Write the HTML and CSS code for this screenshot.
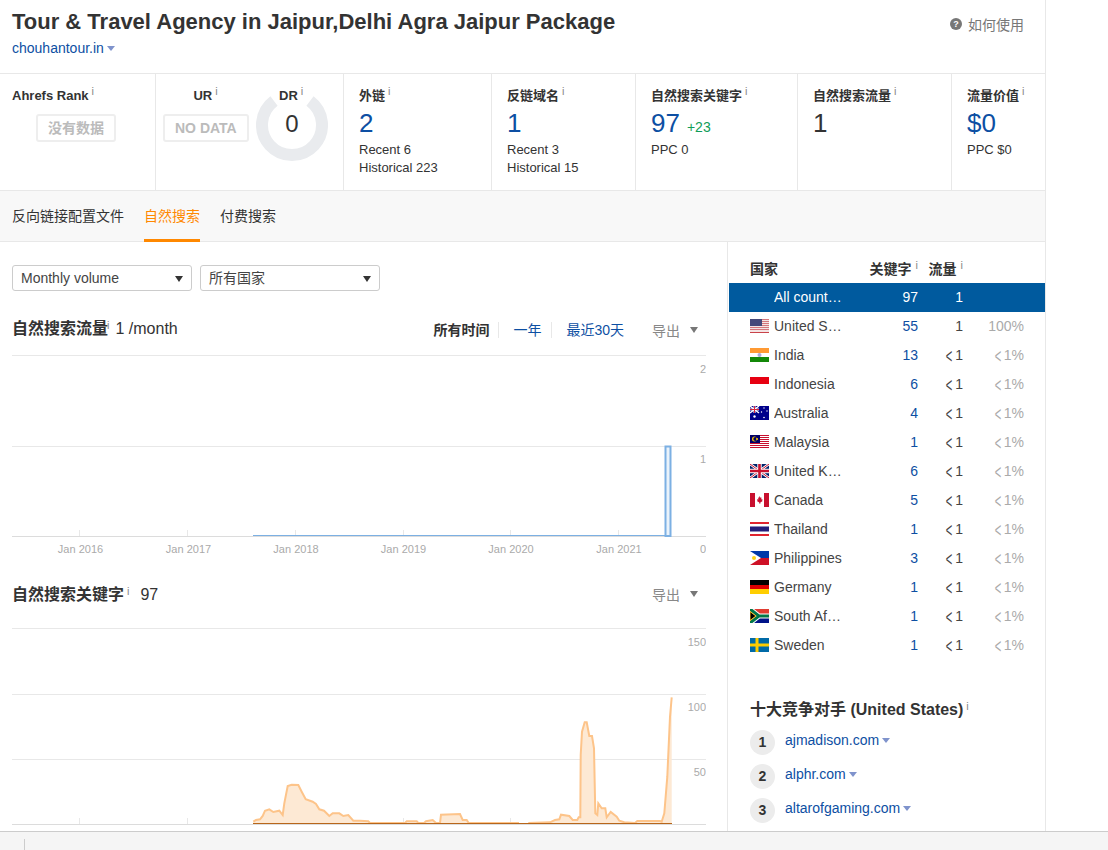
FILE: index.html
```html
<!DOCTYPE html>
<html>
  <head>
    <title>Tour &amp; Travel Agency in Jaipur</title>
    <link rel="stylesheet" href="styles.css">
  </head>
  <body>
    <!-- flags, drawn once and reused in the country table -->
    <svg class="defs" width="0" height="0">
      <symbol id="f-us" viewBox="0 0 19 14">
        <rect width="19" height="14" fill="#f4e4e4"/>
        <path d="M0 8.500h19M0 10.500h19M12 .5h7M12 2.500h7M12 4.500h7M12 6.500h7" stroke="#d4777c" stroke-width="1"/>
        <rect width="12" height="7" fill="#45497a"/>
        <path d="M0 13.500h19" stroke="#c9434a"/>
      </symbol>
      <symbol id="f-in" viewBox="0 0 19 14">
        <rect width="19" height="14" fill="#fff"/>
        <rect width="19" height="5" fill="#ff9a33"/>
        <rect y="9" width="19" height="5" fill="#138808"/>
        <circle cx="9.500" cy="7" r="2" fill="#a9a9d8"/>
      </symbol>
      <symbol id="f-id" viewBox="0 0 19 14">
        <rect width="19" height="7" fill="#e70011"/>
      </symbol>
      <symbol id="f-au" viewBox="0 0 19 14">
        <rect width="19" height="14" fill="#00008b"/>
        <path d="M0 0l9 7M9 0L0 7" stroke="#fff" stroke-width="1.400"/>
        <path d="M4.500 0v7M0 3.500h9" stroke="#fff" stroke-width="2"/>
        <path d="M4.500 0v7M0 3.500h9" stroke="#d8263c" stroke-width="1"/>
        <g fill="#fff">
          <circle cx="4.500" cy="10.500" r="1.200"/>
          <circle cx="14" cy="2" r=".7"/>
          <circle cx="17" cy="5" r=".7"/>
          <circle cx="11.500" cy="6" r=".7"/>
          <circle cx="14" cy="11.500" r=".8"/>
        </g>
      </symbol>
      <symbol id="f-my" viewBox="0 0 19 14">
        <rect width="19" height="14" fill="#fff"/>
        <path d="M0 .5h19M0 2.500h19M0 4.500h19M0 6.500h19M0 8.500h19M0 10.500h19M0 12.500h19" stroke="#c8102e" stroke-width="1"/>
        <rect width="10" height="8" fill="#010066"/>
        <circle cx="4.500" cy="4" r="2.500" fill="#fc0"/>
        <circle cx="5.300" cy="4" r="2" fill="#010066"/>
        <circle cx="7" cy="4" r="1.100" fill="#fc0"/>
      </symbol>
      <symbol id="f-gb" viewBox="0 0 19 14">
        <rect width="19" height="14" fill="#012169"/>
        <path d="M0 0l19 14M19 0L0 14" stroke="#fff" stroke-width="2.600"/>
        <path d="M0 0l19 14M19 0L0 14" stroke="#c8102e" stroke-width="1"/>
        <path d="M9.500 0v14M0 7h19" stroke="#fff" stroke-width="4.400"/>
        <path d="M9.500 0v14M0 7h19" stroke="#c8102e" stroke-width="2.600"/>
      </symbol>
      <symbol id="f-ca" viewBox="0 0 19 14">
        <rect width="19" height="14" fill="#fff"/>
        <rect width="5" height="14" fill="#c8102e"/>
        <rect x="14" width="5" height="14" fill="#c8102e"/>
        <path d="M9.500 3l1 1.800 1-.3-.3 2 1.300-.4-.4 1.500.6.500-2.400 1.400.2 1H9.100l.2-1-2.400-1.400.6-.5-.4-1.500 1.300.4-.3-2 1 .3z" fill="#c8102e"/>
      </symbol>
      <symbol id="f-th" viewBox="0 0 19 14">
        <rect width="19" height="14" fill="#fff"/>
        <rect width="19" height="2" fill="#e0242f"/>
        <rect y="12" width="19" height="2" fill="#e0242f"/>
        <rect y="4.500" width="19" height="5" fill="#241d7a"/>
      </symbol>
      <symbol id="f-ph" viewBox="0 0 19 14">
        <rect width="19" height="7" fill="#0038a8"/>
        <rect y="7" width="19" height="7" fill="#ce1126"/>
        <path d="M0 0l11 7-11 7z" fill="#fff"/>
        <circle cx="4" cy="7" r="2" fill="#fcd116"/>
      </symbol>
      <symbol id="f-de" viewBox="0 0 19 14">
        <rect width="19" height="5" fill="#000"/>
        <rect y="5" width="19" height="4" fill="#d00"/>
        <rect y="9" width="19" height="5" fill="#ffce00"/>
      </symbol>
      <symbol id="f-za" viewBox="0 0 19 14">
        <rect width="19" height="7" fill="#e03c31"/>
        <rect y="7" width="19" height="7" fill="#001489"/>
        <path d="M0 0l9 7-9 7M9 7h10" fill="none" stroke="#fff" stroke-width="5"/>
        <path d="M0 0l9 7-9 7M9 7h10" fill="none" stroke="#007749" stroke-width="3"/>
        <path d="M0 2.500L6 7l-6 4.500z" fill="#000" stroke="#ffb81c"/>
      </symbol>
      <symbol id="f-se" viewBox="0 0 19 14">
        <rect width="19" height="14" fill="#006aa7"/>
        <path d="M7 0v14M0 7h19" stroke="#fecc00" stroke-width="3"/>
      </symbol>
    </svg>

    <div class="page">
      <div class="main">
        <header class="site-head">
          <div>
            <h1>Tour &amp; Travel Agency in Jaipur,Delhi Agra Jaipur Package</h1>
            <a class="link site-url">chouhantour.in<span class="caret"></span></a>
          </div>
          <div class="help"><span class="help-icon">?</span>如何使用</div>
        </header>

        <section class="stats">
          <div class="stat stat-rank">
            <div class="stat-label">Ahrefs Rank<sup class="i">i</sup></div>
            <div class="no-data">没有数据</div>
          </div>
          <div class="stat stat-ratings">
            <div class="rating">
              <div class="stat-label">UR<sup class="i">i</sup></div>
              <div class="no-data">NO DATA</div>
            </div>
            <div class="rating rating-dr">
              <svg class="donut" width="72" height="72" viewBox="0 0 72 72">
                <path d="M54 12A30 30 0 1 1 18 12" fill="none" stroke="#e9ebee" stroke-width="12"/>
              </svg>
              <div class="stat-label">DR<sup class="i">i</sup></div>
              <div class="dr-value">0</div>
            </div>
          </div>
          <div class="stat">
            <div class="stat-label">外链<sup class="i">i</sup></div>
            <div class="stat-num blue">2</div>
            <div class="stat-sub">Recent 6<br>Historical 223</div>
          </div>
          <div class="stat">
            <div class="stat-label">反链域名<sup class="i">i</sup></div>
            <div class="stat-num blue">1</div>
            <div class="stat-sub">Recent 3<br>Historical 15</div>
          </div>
          <div class="stat">
            <div class="stat-label">自然搜索关键字<sup class="i">i</sup></div>
            <div class="stat-num blue">97<span class="delta">+23</span></div>
            <div class="stat-sub">PPC 0</div>
          </div>
          <div class="stat">
            <div class="stat-label">自然搜索流量<sup class="i">i</sup></div>
            <div class="stat-num">1</div>
          </div>
          <div class="stat stat-last">
            <div class="stat-label">流量价值<sup class="i">i</sup></div>
            <div class="stat-num blue">$0</div>
            <div class="stat-sub">PPC $0</div>
          </div>
        </section>

        <nav class="tabs">
          <a class="tab">反向链接配置文件</a>
          <a class="tab active">自然搜索</a>
          <a class="tab">付费搜索</a>
        </nav>

        <div class="content">
          <div class="left">
            <div class="filters">
              <div class="select">Monthly volume</div>
              <div class="select">所有国家</div>
            </div>

            <div class="chart-head head-traffic">
              <h2>自然搜索流量<sup class="i i-tight">i</sup></h2>
              <span class="chart-value">1 /month</span>
              <div class="ranges">
                <span class="range range-on">所有时间</span>
                <a class="range">一年</a>
                <a class="range">最近30天</a>
              </div>
              <div class="export">导出<span class="export-caret"></span></div>
            </div>
            <svg class="chart" width="694" height="201" viewBox="12 355 694 201">
              <g stroke="#e8e8e8">
                <path d="M12 355.500h694M12 446.500h694"/>
                <path d="M12 536.500h694" stroke="#dcdcdc"/>
                <path d="M79.500 530v6M187.500 530v6M295.500 530v6M403.500 530v6M510.500 530v6M618.500 530v6"/>
              </g>
              <path d="M665.500 536V446.500h5V536z" fill="#eaf3fb" stroke="#7cb0e3" stroke-width="2"/>
              <path d="M253 535.500h412" stroke="#7cb0e3"/>
              <g class="axis">
                <text x="80.500" y="553" text-anchor="middle">Jan 2016</text>
                <text x="188.500" y="553" text-anchor="middle">Jan 2017</text>
                <text x="296" y="553" text-anchor="middle">Jan 2018</text>
                <text x="403.500" y="553" text-anchor="middle">Jan 2019</text>
                <text x="511" y="553" text-anchor="middle">Jan 2020</text>
                <text x="619" y="553" text-anchor="middle">Jan 2021</text>
                <text x="706" y="373" text-anchor="end">2</text>
                <text x="706" y="463" text-anchor="end">1</text>
                <text x="706" y="553" text-anchor="end">0</text>
              </g>
            </svg>

            <div class="chart-head head-keywords">
              <h2>自然搜索关键字<sup class="i">i</sup></h2>
              <span class="chart-value">97</span>
              <div class="export">导出<span class="export-caret"></span></div>
            </div>
            <svg class="chart" width="694" height="197" viewBox="12 628 694 197">
              <g stroke="#e8e8e8">
                <path d="M12 628.500h694M12 694.500h694M12 759.500h694"/>
                <path d="M12 824.500h694" stroke="#dcdcdc"/>
                <path d="M79.500 818v6M187.500 818v6M295.500 818v6M403.500 818v6M510.500 818v6"/>
              </g>
              <path class="kw-area" d="M253 824L253.300 821.700 256 820 260 819.300 262.700 816 265 810.700 269.300 809.300 273.300 812 279.300 810.700 282.700 815 284.300 803.300 287.700 786 291.700 784.700 298.300 785 301.700 791.700 305.700 799.300 312.700 801.700 316 804 319.300 809.300 324 810.700 329.300 816 332.700 813.300 339.300 813.300 343.300 816 348.300 815 353.300 820.700 360 820.700 368.300 821.300 370 823 405 823 406.700 821.300 416.700 821.300 418.300 823 424 823 426 821.300 432.700 820 436 823 440 823 441 814.700 460 814 462.700 820 466.700 820 468.700 823 519 823 528.300 823 550 822.300 555 820 559.300 819.300 561 814.700 569.300 816 572.700 820 577.300 820 578.700 817.300 580.300 817.300 580.700 755 582 731.700 584.700 722.300 586.700 722.300 589.300 736 592 736 594 748.300 595.300 813.300 597.300 815 598.300 803.300 601.700 808.300 605.300 808.300 606.700 817.300 610.700 812 616.700 816.700 619.300 820.700 624.300 822.300 635 823 637.300 821 660 821 661.700 821.700 664.300 813.300 667.300 776.700 670 716.700 671.700 697.300 671.700 824z"/>
              <path class="kw-line" d="M253.300 821.700L256 820 260 819.300 262.700 816 265 810.700 269.300 809.300 273.300 812 279.300 810.700 282.700 815 284.300 803.300 287.700 786 291.700 784.700 298.300 785 301.700 791.700 305.700 799.300 312.700 801.700 316 804 319.300 809.300 324 810.700 329.300 816 332.700 813.300 339.300 813.300 343.300 816 348.300 815 353.300 820.700 360 820.700 368.300 821.300 370 823 405 823 406.700 821.300 416.700 821.300 418.300 823 424 823 426 821.300 432.700 820 436 823 440 823 441 814.700 460 814 462.700 820 466.700 820 468.700 823 519 823M528.300 823L550 822.300 555 820 559.300 819.300 561 814.700 569.300 816 572.700 820 577.300 820 578.700 817.300 580.300 817.300 580.700 755 582 731.700 584.700 722.300 586.700 722.300 589.300 736 592 736 594 748.300 595.300 813.300 597.300 815 598.300 803.300 601.700 808.300 605.300 808.300 606.700 817.300 610.700 812 616.700 816.700 619.300 820.700 624.300 822.300 635 823 637.300 821 660 821 661.700 821.700 664.300 813.300 667.300 776.700 670 716.700 671.700 697.300"/>
              <path d="M253 823.500h419" stroke="#b8661a"/>
              <g class="axis">
                <text x="706" y="646" text-anchor="end">150</text>
                <text x="706" y="711" text-anchor="end">100</text>
                <text x="706" y="776" text-anchor="end">50</text>
              </g>
            </svg>
          </div>

          <aside class="right">
            <table class="countries">
              <thead>
                <tr>
                  <th class="c-name">国家</th>
                  <th class="c-kw">关键字<sup class="i">i</sup></th>
                  <th class="c-tr">流量<sup class="i">i</sup></th>
                  <th class="c-pct"></th>
                  <th class="c-end"></th>
                </tr>
              </thead>
              <tbody>
                <tr class="row-on">
                  <td class="c-name"><div class="name-cell"><span class="flag"></span><span class="name">All countries</span></div></td>
                  <td class="c-kw">97</td><td class="c-tr">1</td><td class="c-pct"></td><td></td>
                </tr>
                <tr>
                  <td class="c-name"><div class="name-cell"><svg class="flag"><use href="#f-us"/></svg><span class="name">United States</span></div></td>
                  <td class="c-kw"><a class="link">55</a></td><td class="c-tr">1</td><td class="c-pct">100%</td><td></td>
                </tr>
                <tr>
                  <td class="c-name"><div class="name-cell"><svg class="flag"><use href="#f-in"/></svg><span class="name">India</span></div></td>
                  <td class="c-kw"><a class="link">13</a></td><td class="c-tr"><span class="lt">&lt;</span>1</td><td class="c-pct"><span class="lt">&lt;</span>1%</td><td></td>
                </tr>
                <tr>
                  <td class="c-name"><div class="name-cell"><svg class="flag"><use href="#f-id"/></svg><span class="name">Indonesia</span></div></td>
                  <td class="c-kw"><a class="link">6</a></td><td class="c-tr"><span class="lt">&lt;</span>1</td><td class="c-pct"><span class="lt">&lt;</span>1%</td><td></td>
                </tr>
                <tr>
                  <td class="c-name"><div class="name-cell"><svg class="flag"><use href="#f-au"/></svg><span class="name">Australia</span></div></td>
                  <td class="c-kw"><a class="link">4</a></td><td class="c-tr"><span class="lt">&lt;</span>1</td><td class="c-pct"><span class="lt">&lt;</span>1%</td><td></td>
                </tr>
                <tr>
                  <td class="c-name"><div class="name-cell"><svg class="flag"><use href="#f-my"/></svg><span class="name">Malaysia</span></div></td>
                  <td class="c-kw"><a class="link">1</a></td><td class="c-tr"><span class="lt">&lt;</span>1</td><td class="c-pct"><span class="lt">&lt;</span>1%</td><td></td>
                </tr>
                <tr>
                  <td class="c-name"><div class="name-cell"><svg class="flag"><use href="#f-gb"/></svg><span class="name">United Kingdom</span></div></td>
                  <td class="c-kw"><a class="link">6</a></td><td class="c-tr"><span class="lt">&lt;</span>1</td><td class="c-pct"><span class="lt">&lt;</span>1%</td><td></td>
                </tr>
                <tr>
                  <td class="c-name"><div class="name-cell"><svg class="flag"><use href="#f-ca"/></svg><span class="name">Canada</span></div></td>
                  <td class="c-kw"><a class="link">5</a></td><td class="c-tr"><span class="lt">&lt;</span>1</td><td class="c-pct"><span class="lt">&lt;</span>1%</td><td></td>
                </tr>
                <tr>
                  <td class="c-name"><div class="name-cell"><svg class="flag"><use href="#f-th"/></svg><span class="name">Thailand</span></div></td>
                  <td class="c-kw"><a class="link">1</a></td><td class="c-tr"><span class="lt">&lt;</span>1</td><td class="c-pct"><span class="lt">&lt;</span>1%</td><td></td>
                </tr>
                <tr>
                  <td class="c-name"><div class="name-cell"><svg class="flag"><use href="#f-ph"/></svg><span class="name">Philippines</span></div></td>
                  <td class="c-kw"><a class="link">3</a></td><td class="c-tr"><span class="lt">&lt;</span>1</td><td class="c-pct"><span class="lt">&lt;</span>1%</td><td></td>
                </tr>
                <tr>
                  <td class="c-name"><div class="name-cell"><svg class="flag"><use href="#f-de"/></svg><span class="name">Germany</span></div></td>
                  <td class="c-kw"><a class="link">1</a></td><td class="c-tr"><span class="lt">&lt;</span>1</td><td class="c-pct"><span class="lt">&lt;</span>1%</td><td></td>
                </tr>
                <tr>
                  <td class="c-name"><div class="name-cell"><svg class="flag"><use href="#f-za"/></svg><span class="name">South Africa</span></div></td>
                  <td class="c-kw"><a class="link">1</a></td><td class="c-tr"><span class="lt">&lt;</span>1</td><td class="c-pct"><span class="lt">&lt;</span>1%</td><td></td>
                </tr>
                <tr>
                  <td class="c-name"><div class="name-cell"><svg class="flag"><use href="#f-se"/></svg><span class="name">Sweden</span></div></td>
                  <td class="c-kw"><a class="link">1</a></td><td class="c-tr"><span class="lt">&lt;</span>1</td><td class="c-pct"><span class="lt">&lt;</span>1%</td><td></td>
                </tr>
              </tbody>
            </table>

            <h3 class="rivals-title">十大竞争对手 (United States)<sup class="i">i</sup></h3>
            <ol class="rivals">
              <li><span class="rank">1</span><a class="link">ajmadison.com<span class="caret"></span></a></li>
              <li><span class="rank">2</span><a class="link">alphr.com<span class="caret"></span></a></li>
              <li><span class="rank">3</span><a class="link">altarofgaming.com<span class="caret"></span></a></li>
            </ol>
          </aside>
        </div>
      </div>
      <footer class="bottom-bar"><span class="bar-tick"></span></footer>
    </div>
  </body>
</html>
```

FILE: styles.css
```css
* {
  box-sizing: border-box;
}
html, body {
  margin: 0;
  height: 100%;
  overflow: hidden;
}
body {
  background: #fff;
  color: #333;
  font-family: "Liberation Sans", "Noto Sans CJK SC", sans-serif;
  font-size: 14px;
}
.defs {
  display: block;
  height: 0;
}
.page {
  display: flex;
  flex-direction: column;
  height: 850px;
}
.main {
  flex: none;
  width: 1046px;
  height: 831px;
  border-right: 1px solid #e8e8e8;
  overflow: hidden;
}
.link {
  color: #0d4fa3;
}
.blue {
  color: #0d4fa3;
}
.caret {
  display: inline-block;
  margin-left: 3px;
  border-left: 4px solid transparent;
  border-right: 4px solid transparent;
  border-top: 5px solid #7f93cc;
  vertical-align: 2px;
}
.i {
  margin-left: 3px;
  color: #888;
  font-size: 11px;
  font-weight: normal;
  line-height: 0;
  vertical-align: 5px;
}

/* header */
.site-head {
  display: flex;
  justify-content: space-between;
  height: 74px;
  padding: 8px 21px 0 12px;
  border-bottom: 1px solid #e8e8e8;
}
h1 {
  margin: 0;
  font-size: 22px;
  line-height: 28px;
}
.site-url {
  display: block;
  margin-top: 2px;
  line-height: 20px;
}
.help {
  display: flex;
  align-items: center;
  height: 20px;
  margin-top: 6px;
  color: #777;
}
.help-icon {
  display: flex;
  align-items: center;
  justify-content: center;
  width: 12px;
  height: 12px;
  margin-right: 6px;
  border-radius: 50%;
  background: #777;
  color: #fff;
  font-size: 9px;
  font-weight: bold;
}

/* stats row */
.stats {
  display: grid;
  grid-template-columns: 156px 188px 148px 144px 162px 154px 93px;
  height: 117px;
  border-bottom: 1px solid #e8e8e8;
}
.stat {
  padding: 13px 0 0 15px;
  border-right: 1px solid #e8e8e8;
}
.stat-last {
  border-right: none;
}
.stat-label {
  font-size: 13px;
  font-weight: bold;
  line-height: 18px;
}
.stat-num {
  margin-top: 3px;
  font-size: 26px;
  line-height: 30px;
}
.delta {
  margin-left: 7px;
  color: #0f9d58;
  font-size: 14px;
  line-height: 1;
}
.stat-sub {
  margin-top: 3px;
  font-size: 13px;
  line-height: 18px;
}
.no-data {
  display: inline-block;
  height: 28px;
  padding: 0 10px;
  border: 2px solid #eee;
  border-radius: 3px;
  color: #bbb;
  font-size: 14px;
  font-weight: bold;
  line-height: 24px;
  white-space: nowrap;
}
.stat-rank {
  padding-left: 12px;
}
.stat-rank .no-data {
  margin: 9px 0 0 24px;
}
.stat-ratings {
  display: flex;
  padding-left: 7px;
}
.rating {
  width: 85px;
  text-align: center;
}
.rating .no-data {
  margin-top: 9px;
}
.rating-dr {
  position: relative;
  width: 72px;
  margin-left: 8px;
  text-align: left;
}
.rating-dr .stat-label {
  position: relative;
  padding-left: 23px;
}
.donut {
  position: absolute;
  top: 2px;
  left: 0;
}
.dr-value {
  position: relative;
  margin-top: 5px;
  font-size: 24px;
  line-height: 28px;
  text-align: center;
}

/* tabs */
.tabs {
  display: flex;
  gap: 20px;
  height: 51px;
  padding-left: 12px;
  border-bottom: 1px solid #e8e8e8;
  background: #f8f8f8;
}
.tab {
  height: 51px;
  line-height: 51px;
  font-size: 14px;
}
.tab.active {
  border-bottom: 3px solid #ff8800;
  color: #ff8800;
}

/* left column */
.content {
  display: flex;
  height: 590px;
}
.left {
  width: 728px;
  padding: 23px 21px 0 12px;
  border-right: 1px solid #e8e8e8;
}
.filters {
  display: flex;
  gap: 8px;
}
.select {
  position: relative;
  width: 180px;
  height: 26px;
  padding-left: 8px;
  border: 1px solid #ccc;
  border-radius: 3px;
  color: #444;
  line-height: 24px;
}
.select::after {
  content: "";
  position: absolute;
  top: 10px;
  right: 8px;
  border-left: 4px solid transparent;
  border-right: 4px solid transparent;
  border-top: 6px solid #333;
}
.chart-head {
  display: flex;
  align-items: center;
  height: 28px;
}
.head-traffic {
  margin: 24px 0 12px;
}
.head-keywords {
  margin: 25px 0 19px;
}
h2 {
  margin: 0;
  font-size: 16px;
  line-height: 28px;
}
.i-tight {
  margin-left: -1px;
}
.chart-value {
  margin-left: 6px;
  font-size: 16px;
}
.head-keywords .chart-value {
  margin-left: 11px;
}
.ranges {
  display: flex;
  align-items: center;
  margin-left: auto;
  margin-top: 2px;
}
.range {
  height: 16px;
  padding: 0 10px 0 14px;
  border-right: 1px solid #e8e8e8;
  color: #0d4fa3;
  line-height: 16px;
}
.range:last-child {
  border-right: none;
}
.range-on {
  padding-right: 9px;
  color: #333;
  font-weight: bold;
}
.export {
  display: flex;
  align-items: center;
  width: 72px;
  margin-top: 2px;
  padding-left: 18px;
  color: #888;
}
.head-keywords .export {
  margin-left: auto;
  margin-top: -2px;
}
.export-caret {
  margin-left: 10px;
  border-left: 4px solid transparent;
  border-right: 4px solid transparent;
  border-top: 6px solid #777;
}
.chart {
  display: block;
}
.axis text {
  fill: #aaa;
  font-size: 11px;
}
.kw-area {
  fill: #fde9d4;
}
.kw-line {
  fill: none;
  stroke: #fdc48a;
  stroke-width: 2;
}

/* right column */
.right {
  width: 317px;
  padding: 14px 0 0 1px;
}
.countries {
  width: 316px;
  border-collapse: collapse;
  table-layout: fixed;
}
.countries th {
  height: 27px;
  padding: 0 0 2px;
  font-size: 14px;
  line-height: 16px;
}
.countries td {
  height: 29px;
  padding: 0 0 2px;
  color: #444;
}
.c-name {
  width: 119px;
  padding-left: 21px !important;
  text-align: left;
}
.c-kw {
  width: 70px;
  text-align: right;
}
.c-tr {
  width: 45px;
  text-align: right;
}
.countries td.c-pct {
  color: #aaa;
}
.c-pct {
  width: 61px;
  text-align: right;
}
.c-end {
  width: 21px;
}
.countries th .i {
  margin-left: 4px;
}
.name-cell {
  display: flex;
  align-items: center;
}
.flag {
  flex: none;
  width: 19px;
  height: 14px;
  margin-right: 5px;
}
.name {
  width: 70px;
  overflow: hidden;
  text-overflow: ellipsis;
  white-space: nowrap;
}
.countries .row-on td {
  background: #005a9e;
  color: #fff;
}
.lt {
  display: inline-block;
  margin-right: 2px;
  transform: scale(.8, 1.5);
}
.rivals-title {
  margin: 39px 0 0 21px;
  font-size: 16px;
  line-height: 22px;
}
.rivals {
  margin: 9px 0 0 21px;
  padding: 0;
  list-style: none;
}
.rivals li {
  display: flex;
  gap: 10px;
  height: 25px;
  margin-bottom: 9px;
  line-height: 20px;
}
.rank {
  width: 25px;
  height: 25px;
  border-radius: 50%;
  background: #ececec;
  font-size: 14px;
  font-weight: bold;
  line-height: 25px;
  text-align: center;
}

/* bottom bar */
.bottom-bar {
  flex: 1;
  padding: 7px 0 0 24px;
  border-top: 1px solid #ccc;
  background: #f5f5f5;
}
.bar-tick {
  display: block;
  width: 1px;
  height: 12px;
  background: #ccc;
}
```
